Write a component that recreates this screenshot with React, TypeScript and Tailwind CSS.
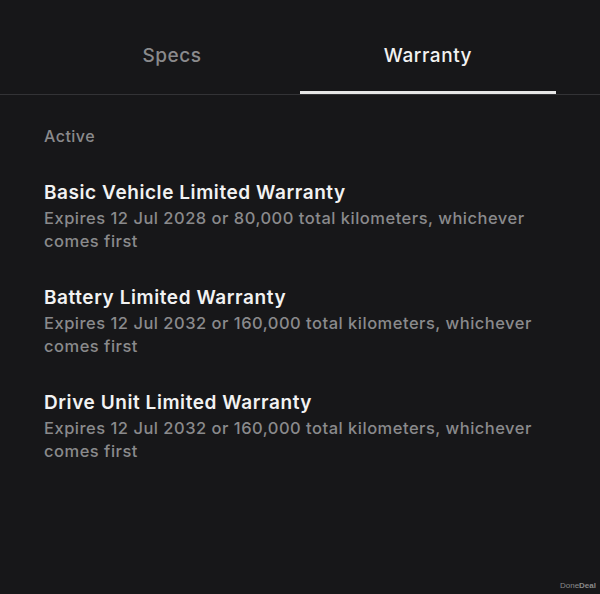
import React from 'react';

const warranties = [
  { title: 'Basic Vehicle Limited Warranty', detail: 'Expires 12 Jul 2028 or 80,000 total kilometers, whichever comes first' },
  { title: 'Battery Limited Warranty', detail: 'Expires 12 Jul 2032 or 160,000 total kilometers, whichever comes first' },
  { title: 'Drive Unit Limited Warranty', detail: 'Expires 12 Jul 2032 or 160,000 total kilometers, whichever comes first' },
];

export default function App() {
  return (
    <div
      className="relative w-[600px] h-[594px] bg-[#171719] overflow-hidden"
      style={{ fontFamily: 'Inter, "Noto Sans", sans-serif' }}
    >
      {/* Tabs */}
      <div className="border-b border-[#333336]">
        <div className="flex px-[44px]">
          <div className="flex-1 h-[94px] flex items-center justify-center text-[19px] font-medium tracking-[0.03em] text-[#8a8a8c] pt-[18px]">
            Specs
          </div>
          <div className="flex-1 h-[94px] flex items-center justify-center text-[19px] font-medium tracking-[0.03em] text-[#f2f2f2] relative pt-[18px]">
            Warranty
            <div className="absolute left-0 right-0 bottom-[0px] h-[3px] bg-[#e6e6e6]" />
          </div>
        </div>
      </div>

      {/* Content */}
      <div className="px-[44px] pt-[31px]">
        <div className="text-[16px] text-[#8a8a8c] font-medium tracking-[0.03em] leading-[20px]">Active</div>
        <div className="flex flex-col gap-[33px] mt-[35px]">
          {warranties.map((w) => (
            <div key={w.title} className="max-w-[510px]">
              <div className="text-[19px] font-semibold tracking-[0.03em] text-[#f2f2f2] leading-[24px]">{w.title}</div>
              <div className="text-[16.5px] font-medium tracking-[0.03em] text-[#8a8a8c] leading-[23px] mt-[2px]">{w.detail}</div>
            </div>
          ))}
        </div>
      </div>

      <div className="absolute right-[4px] bottom-[2px] text-[8px] text-[#8a8a8a]" style={{ fontFamily: '"Liberation Sans", sans-serif' }}>
        Done<span className="font-bold">Deal</span>
      </div>
    </div>
  );
}
